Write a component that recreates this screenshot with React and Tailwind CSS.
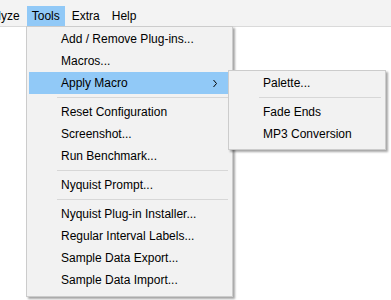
import React from 'react'

// Menubar labels, the first one is cut off by the left edge
const MENUBAR = ['Analyze', 'Tools', 'Extra', 'Help']

// Tools menu: 'sep' marks a separator line
const TOOLS_ITEMS = [
  'Add / Remove Plug-ins...',
  'Macros...',
  { label: 'Apply Macro', sub: true, active: true },
  'sep',
  'Reset Configuration',
  'Screenshot...',
  'Run Benchmark...',
  'sep',
  'Nyquist Prompt...',
  'sep',
  'Nyquist Plug-in Installer...',
  'Regular Interval Labels...',
  'Sample Data Export...',
  'Sample Data Import...',
]

const MACRO_ITEMS = ['Palette...', 'sep', 'Fade Ends', 'MP3 Conversion']

function Chevron() {
  return (
    <svg width="6" height="9" viewBox="0 0 6 9" fill="none">
      <path d="M1.5 1l3 3.5-3 3.5" stroke="#000" strokeWidth="1" />
    </svg>
  )
}

function MenuList({ items }) {
  return items.map((it, i) => {
    if (it === 'sep') {
      return (
        <div key={i} className="h-[7px] flex items-center pl-[28px] pr-[2px]">
          <div className="h-px w-full bg-[#d7d7d7]" />
        </div>
      )
    }
    const item = typeof it === 'string' ? { label: it } : it
    return (
      <div
        key={i}
        className={`h-[22px] flex items-center pl-[32px] pr-[12px] ${item.active ? 'bg-[#91c9f7]' : ''}`}
      >
        <span className="flex-1 whitespace-nowrap">{item.label}</span>
        {item.sub && <Chevron />}
      </div>
    )
  })
}

export default function App() {
  return (
    <div
      className="relative w-[391px] h-[300px] overflow-hidden bg-white text-[12px] text-black"
      style={{ fontFamily: '"Liberation Sans", Arial, sans-serif' }}
    >
      {/* Menubar */}
      <div className="h-[27px] pt-[6px] bg-[#f3f3f3] border-b border-[#dadada] flex gap-[2px]">
        {MENUBAR.map((m, i) => (
          <div
            key={m}
            className={`h-[20px] px-[5px] flex items-center whitespace-nowrap ${i === 0 ? 'ml-[-28px]' : ''} ${m === 'Tools' ? 'bg-[#91c9f7]' : ''}`}
          >
            {m}
          </div>
        ))}
      </div>

      {/* Tools dropdown */}
      <div className="absolute left-[26px] top-[26px] w-[207px] bg-[#f2f2f2] border border-[#cccccc] pt-[1px] pb-[5px] px-[2px] shadow-[2px_2px_2px_rgba(0,0,0,0.35)]">
        <MenuList items={TOOLS_ITEMS} />
      </div>

      {/* Apply Macro submenu */}
      <div className="absolute left-[228px] top-[70px] w-[158px] bg-[#f2f2f2] border border-[#cccccc] pt-[1px] pb-[4px] px-[2px] shadow-[2px_2px_2px_rgba(0,0,0,0.35)]">
        <MenuList items={MACRO_ITEMS} />
      </div>
    </div>
  )
}
